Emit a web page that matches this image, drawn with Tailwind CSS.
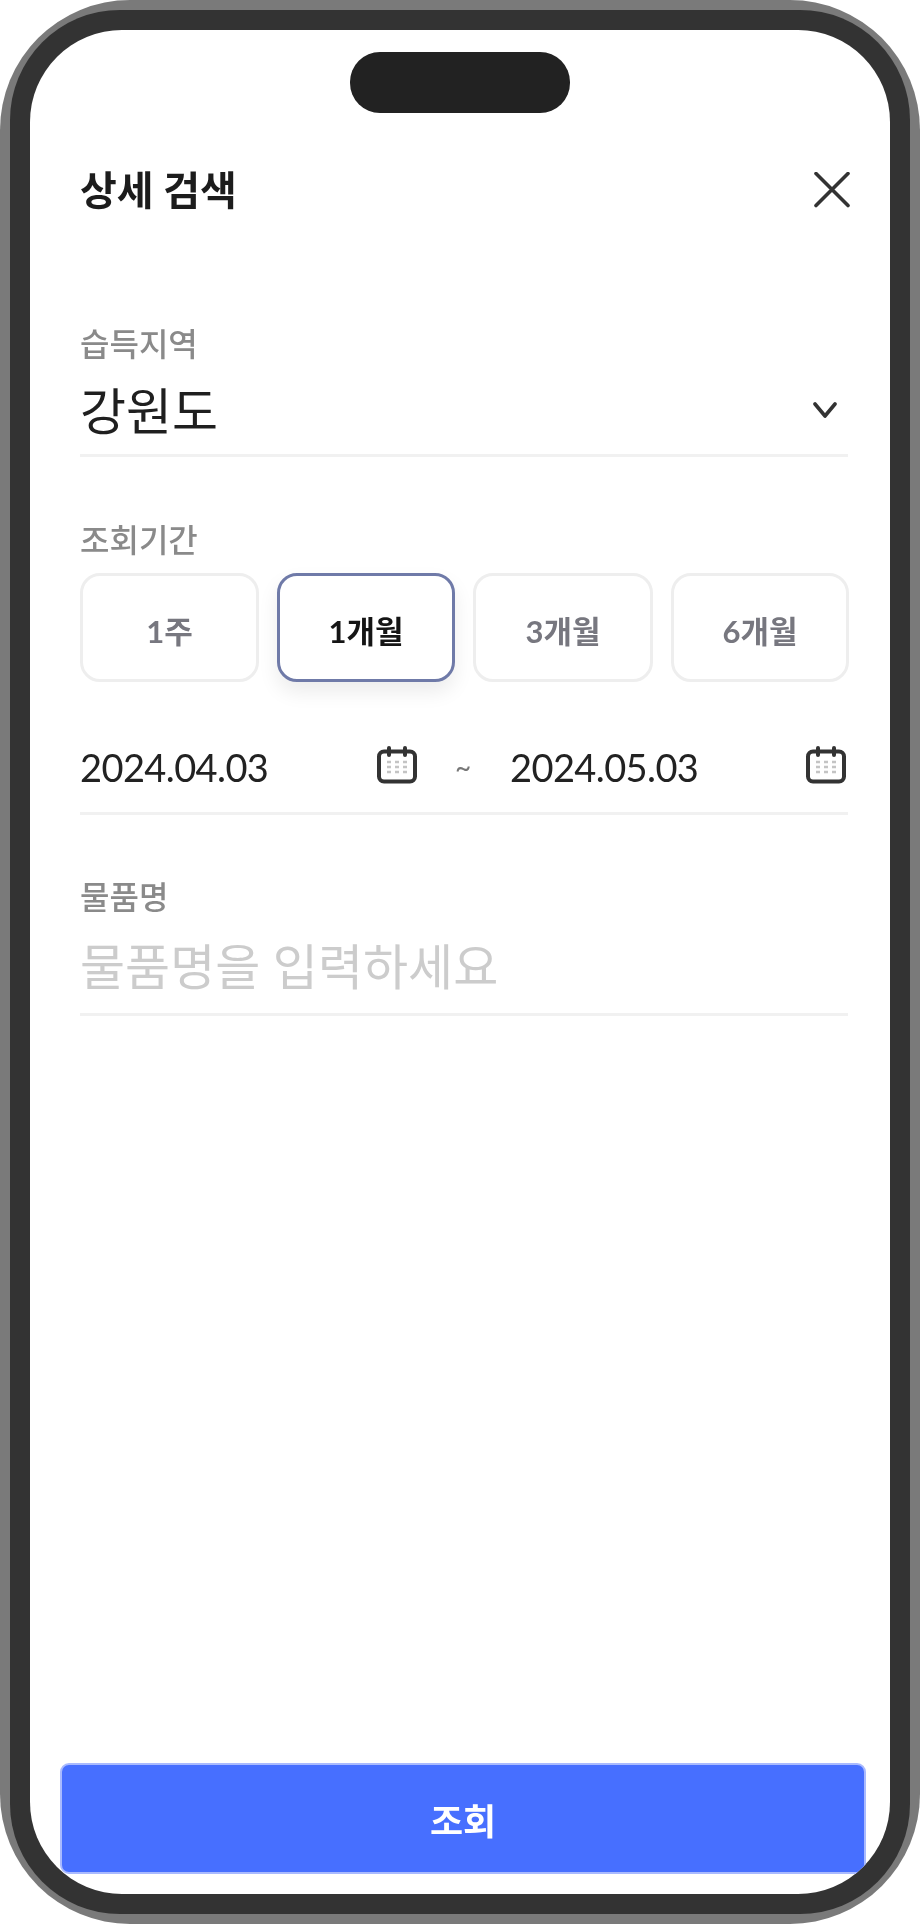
<!DOCTYPE html>
<html lang="ko">
<head>
    <meta charset="UTF-8">
    <title>상세 검색</title>
    <script src="https://cdn.jsdelivr.net/npm/@tailwindcss/browser@4"></script>
</head>
<body class="bg-white font-['Lato','Noto_Sans_CJK_KR',sans-serif]">
    <div class="w-[920px] h-[1924px] bg-[#7a7a7a] rounded-[130px] p-[10px]">
        <div class="w-full h-full bg-[#333333] rounded-[110px] p-[20px]">
            <div class="relative w-full h-full bg-white rounded-[92px] overflow-hidden flex flex-col pt-[136px]">
                <!-- dynamic island -->
                <div class="absolute top-[22px] left-[320px] w-[220px] h-[61px] bg-[#222222] rounded-[30px]"></div>

                <div class="pl-[50px] pr-[42px] blur-[0.6px]">
                    <div class="flex items-center justify-between h-[48px]">
                        <h1 class="text-[40px] leading-[48px] font-bold text-[#1c1c1c]">상세 검색</h1>
                        <button class="w-[36px] h-[36px] -mr-[2px]">
                            <svg viewBox="0 0 36 36" class="w-[36px] h-[36px]" fill="none" stroke="#333333" stroke-width="3.6" stroke-linecap="round"><path d="M2 1.5 34 33.500M34 1.500 2 33.500"/></svg>
                        </button>
                    </div>

                    <label class="block mt-[110px] text-[32px] leading-[40px] font-medium text-[#8a8a8a]">습득지역</label>
                    <div class="flex items-center justify-between mt-[17px] pb-[13px] border-b-[3px] border-[#f1f1f1]">
                        <span class="text-[50px] leading-[60px] text-[#1f1f1f]">강원도</span>
                        <svg viewBox="0 0 24 16" class="w-[24px] h-[16px] mr-[11px] -mt-[2px]" fill="none" stroke="#333333" stroke-width="3.6" stroke-linecap="round" stroke-linejoin="round"><path d="M2 2 12 14 22 2"/></svg>
                    </div>

                    <label class="block mt-[63px] text-[32px] leading-[40px] font-medium text-[#8a8a8a]">조회기간</label>
                    <div class="grid grid-cols-[179px_178px_180px_178px] gap-[18px] mt-[13px]">
                        <button class="h-[109px] pt-[8px] rounded-[20px] border-[3px] border-[#eeeeee] bg-white text-[31px] font-bold text-[#77777f]">1주</button>
                        <button class="h-[109px] pt-[8px] rounded-[20px] border-[3px] border-[#6f7aa8] bg-white text-[31px] font-bold text-[#151515] shadow-[0_10px_20px_rgba(0,0,0,0.08)]">1개월</button>
                        <button class="h-[109px] pt-[8px] rounded-[20px] border-[3px] border-[#eeeeee] bg-white text-[31px] font-bold text-[#77777f]">3개월</button>
                        <button class="h-[109px] pt-[8px] rounded-[20px] border-[3px] border-[#eeeeee] bg-white text-[31px] font-bold text-[#77777f]">6개월</button>
                    </div>

                    <div class="flex items-center mt-[55px] pb-[15px] border-b-[3px] border-[#f1f1f1] h-[78px]">
                        <span class="w-[297px] text-[38px] tracking-[-0.6px] leading-[60px] text-[#222222]">2024.04.03</span>
                        <svg viewBox="0 0 40 38" class="w-[40px] h-[38px] -mt-[5px]" fill="none">
                            <rect x="2" y="5.500" width="36" height="30" rx="5" stroke="#333333" stroke-width="4"/>
                            <path d="M12 2v7M28 2v7" stroke="#333333" stroke-width="4" stroke-linecap="round"/>
                            <path d="M10 16h4M18 16h4M26 16h4M10 21h4M18 21h4M26 21h4M10 26h4M18 26h4M26 26h4" stroke="#c4c4c4" stroke-width="2.500"/>
                        </svg>
                        <span class="w-[93px] pl-[38px] text-[28px] leading-[60px] text-[#777777]">~</span>
                        <span class="w-[296px] text-[38px] tracking-[-0.6px] leading-[60px] text-[#222222]">2024.05.03</span>
                        <svg viewBox="0 0 40 38" class="w-[40px] h-[38px] -mt-[5px]" fill="none">
                            <rect x="2" y="5.500" width="36" height="30" rx="5" stroke="#333333" stroke-width="4"/>
                            <path d="M12 2v7M28 2v7" stroke="#333333" stroke-width="4" stroke-linecap="round"/>
                            <path d="M10 16h4M18 16h4M26 16h4M10 21h4M18 21h4M26 21h4M10 26h4M18 26h4M26 26h4" stroke="#c4c4c4" stroke-width="2.500"/>
                        </svg>
                    </div>

                    <label class="block mt-[62px] text-[32px] leading-[40px] font-medium text-[#8a8a8a]">물품명</label>
                    <div class="mt-[20px] pb-[16px] border-b-[3px] border-[#f1f1f1]">
                        <input type="text" placeholder="물품명을 입력하세요" class="block w-full h-[60px] text-[49px] outline-none placeholder:text-[#cccccc]">
                    </div>
                </div>

                <button class="mt-auto mb-[20px] ml-[30px] mr-[24px] h-[111px] pt-[4px] shrink-0 rounded-[9px] bg-[#476fff] border-2 border-[#a9baff] text-[36px] font-bold text-white"><span class="blur-[0.5px]">조회</span></button>
            </div>
        </div>
    </div>
</body>
</html>
